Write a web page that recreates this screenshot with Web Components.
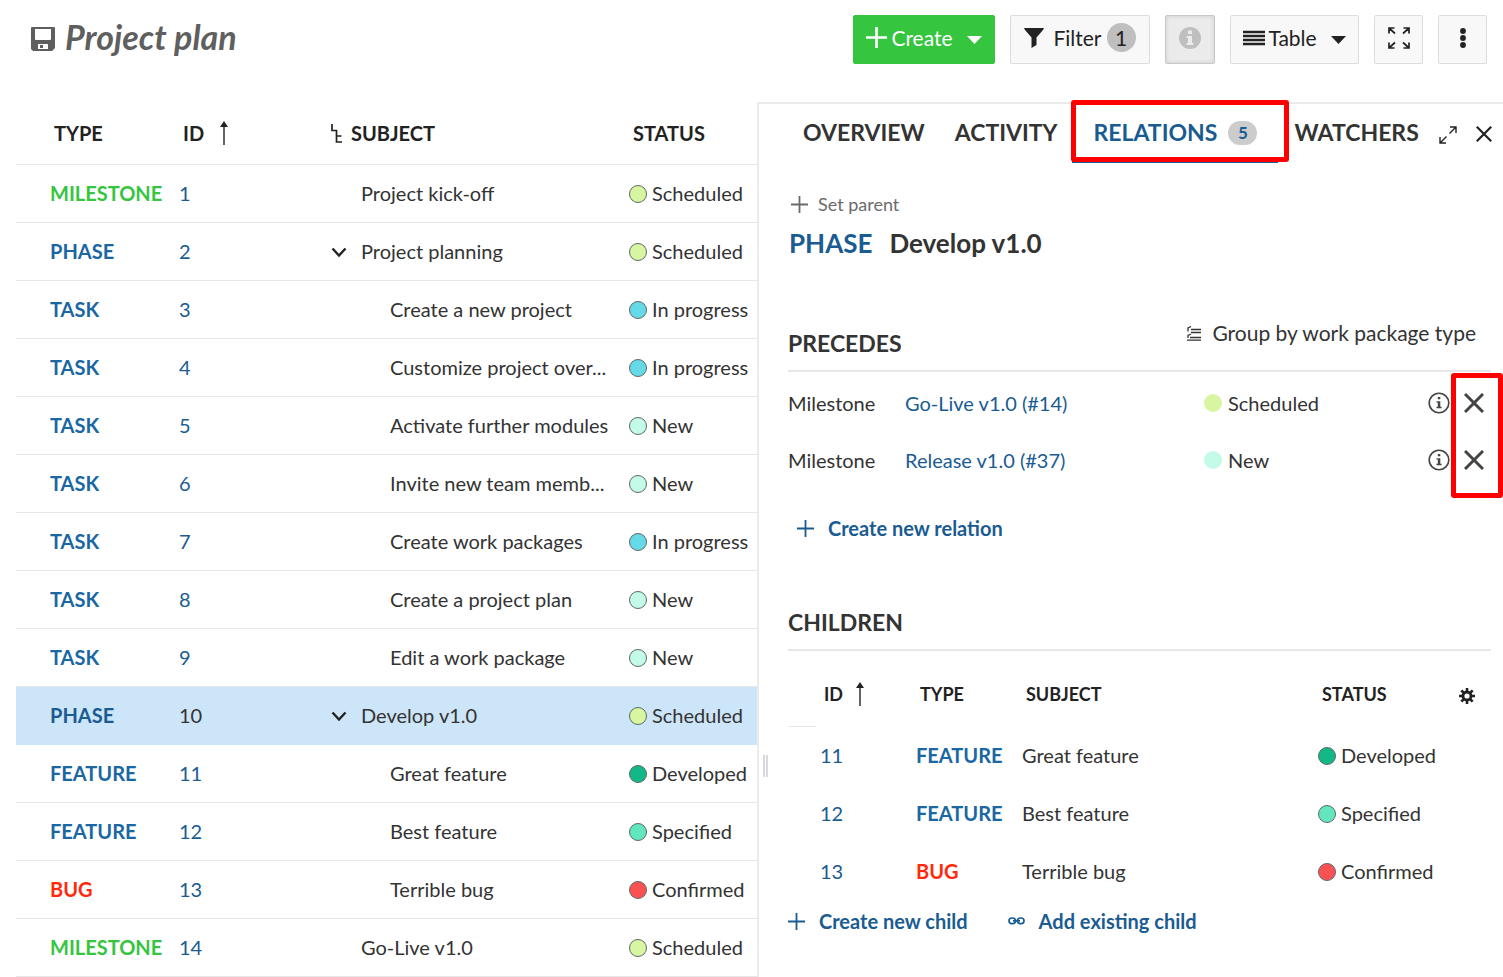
<!DOCTYPE html>
<html lang="en">
<head>
<meta charset="utf-8">
<meta name="viewport" content="width=device-width, initial-scale=1">
<title>Project plan</title>
<style>
  body { margin: 0; background: #fff; color: #333; font: 20px/28px Lato, sans-serif; }
</style>
</head>
<body>
<op-app></op-app>

<script>
const define = (name, html, setup) => {
  const template = document.createElement('template');
  template.innerHTML = html;
  customElements.define(name, class extends HTMLElement {
    constructor() {
      super();
      this.attachShadow({ mode: 'open' }).append(template.content.cloneNode(true));
    }
    connectedCallback() {
      if (setup && !this.ready) { this.ready = true; setup(this, this.shadowRoot); }
    }
  });
};

/* Icons: [viewBox, markup]; the width and height come from the viewBox. */
const ICONS = {
  save: ['0 0 24 24', '<path fill="currentColor" fill-rule="evenodd" d="M1 0H23Q24 0 24 1V21L21 24H2L0 22V1Q0 0 1 0ZM4 2V12Q4 13 5 13H19Q20 13 20 12V2ZM7 17V22H17V17ZM9 18H12V21H9Z"/>'],
  plusBig: ['0 0 21 21', '<path d="M10.500 0V21M0 10.500H21" stroke="currentColor" stroke-width="2.700"/>'],
  plus: ['0 0 17 17', '<path d="M8.500 0V17M0 8.500H17" stroke="currentColor" stroke-width="1.800"/>'],
  caret: ['0 0 15 8', '<path d="M0 0H15L7.500 8Z" fill="currentColor"/>'],
  filter: ['0 0 20 20', '<path d="M0 0H20L19 2L12.500 9.500V17L7.500 20V9.500L1 2Z" fill="currentColor"/>'],
  infoSolid: ['0 0 22 22', '<circle cx="11" cy="11" r="11" fill="currentColor"/><path d="M9 3.500H13V7H9ZM7.500 9H13V16H14.500V18H7.500V16H9V11H7.500Z" fill="#ebebeb"/>'],
  info: ['0 0 22 22', '<circle cx="11" cy="11" r="9.800" fill="none" stroke="currentColor" stroke-width="1.600"/><path d="M9.800 5H12.300V7.300H9.800ZM8.500 9.200H12.300V14.800H13.600V16.200H8.500V14.800H9.800V10.600H8.500Z" fill="currentColor"/>'],
  table: ['0 0 22 16', '<path d="M0 2H22M0 6H22M0 10H22M0 14H22" stroke="currentColor" stroke-width="2.600"/>'],
  fullscreen: ['0 0 22 22', '<path d="M1 6.500V1H6.500M1.500 1.500L7 6.500M15.500 1H21V6.500M20.500 1.500L15 6.500M1 15.500V21H6.500M1.500 20.500L7 15.500M15.500 21H21V15.500M20.500 20.500L15 15.500" fill="none" stroke="currentColor" stroke-width="1.700"/>'],
  dots: ['0 0 6 20', '<g fill="currentColor"><circle cx="3" cy="3" r="2.900"/><circle cx="3" cy="10" r="2.900"/><circle cx="3" cy="17" r="2.900"/></g>'],
  sortUp: ['0 0 8 24', '<path d="M4 0L8 6H0Z" fill="currentColor"/><path d="M4 4V24" stroke="currentColor" stroke-width="1.400"/>'],
  hierarchy: ['0 0 11 19', '<path d="M1 0V6.500H5.500V18H11M5.500 12H10.500" fill="none" stroke="currentColor" stroke-width="1.700"/>'],
  chevron: ['0 0 16 11', '<path d="M1.500 1.500L8 8.500L14.500 1.500" fill="none" stroke="currentColor" stroke-width="2.400"/>'],
  expand: ['0 0 18 18', '<path d="M11 1H17V7M16.500 1.500L10.500 7.500M1 11V17H7M1.500 16.500L7.500 10.500" fill="none" stroke="currentColor" stroke-width="1.400"/>'],
  close: ['0 0 16 16', '<path d="M.8.800L15.200 15.200M15.200.800L.8 15.200" stroke="currentColor" stroke-width="2.200"/>'],
  remove: ['0 0 20 20', '<path d="M1 1L19 19M19 1L1 19" stroke="currentColor" stroke-width="3"/>'],
  group: ['0 0 14 15', '<path d="M4 3.500H14M4 6.500H14M3 11.500H14M0 14.200H14M1 5.500V2L4 .5M1 12V9.500L4 8" fill="none" stroke="currentColor" stroke-width="1.300"/>'],
  gear: ['0 0 16 16', '<circle cx="8" cy="8" r="4" fill="none" stroke="currentColor" stroke-width="2.800"/><path d="M8 0V4M8 12V16M0 8H4M12 8H16M2.300 2.300L5 5M11 11L13.700 13.700M13.700 2.300L11 5M5 11L2.300 13.700" stroke="currentColor" stroke-width="2.600"/>'],
  link: ['0 0 17 8', '<g fill="none" stroke="currentColor" stroke-width="1.700"><rect x="1" y="1" width="6.500" height="5.600" rx="2.800"/><rect x="9.500" y="1" width="6.500" height="5.600" rx="2.800"/></g><path d="M5 3.800H12" stroke="currentColor" stroke-width="1.800"/>']
};

define('op-icon', `
  <style>:host { display: block; flex: none; } svg { display: block; }</style>`,
  (el, root) => {
    const [box, markup] = ICONS[el.getAttribute('name')];
    const [, , w, h] = box.split(' ');
    root.innerHTML += `<svg aria-hidden="true" width="${w}" height="${h}" viewBox="${box}">${markup}</svg>`;
  });

define('op-button', `
  <style>
    :host { display: block; flex: none; width: 49px; font-size: 21px; }
    :host([active]) { width: 50px; }
    :host([wide]) { width: 140px; }
    :host([kind="primary"]) { width: 142px; }
    :host([kind="view"]) { width: 129px; }
    button {
      box-sizing: border-box; width: 100%; height: 49px; padding: 0 0 4px; cursor: pointer;
      display: flex; align-items: center; justify-content: center;
      font: inherit; color: #222; background: #f8f8f8; border: 1px solid #ddd; border-radius: 2px;
    }
    :host([kind="primary"]) button { color: #fff; background: #35c53f; border-color: #35c53f; }
    :host([active]) button { color: #bfbfbf; background: #ebebeb; border-color: #c8c8c8; box-shadow: inset 0 0 4px #ccc; }
  </style>
  <button type="button"><slot></slot></button>`,
  (el, root) => el.title && root.querySelector('button').setAttribute('aria-label', el.title));

const STATUS = { Scheduled: '#d8f5a2', 'In progress': '#66d9e8', New: '#c3fae8', Developed: '#12b886', Specified: '#63e6be', Confirmed: '#fa5252' };

define('op-status', `
  <style>
    :host { display: flex; align-items: center; gap: 5px; white-space: nowrap; }
    i { box-sizing: border-box; flex: none; width: 18px; height: 18px; margin-top: 2px; border-radius: 50%; border: 1px solid #5d6b66; }
    :host([plain]) { gap: 6px; }
    :host([plain]) i { border: 0; margin: 0; }
  </style>
  <i></i><span></span>`,
  (el, root) => {
    const name = el.getAttribute('value');
    root.querySelector('i').style.background = STATUS[name];
    root.querySelector('span').textContent = name;
  });

define('op-header', `
  <style>
    :host { display: flex; align-items: flex-start; justify-content: space-between; gap: 24px; padding: 15px 16px 38px 31px; }
    h1 { display: flex; align-items: center; gap: 10px; margin: 0; font: italic 700 34px/44px Lato, sans-serif; color: #5f5f5f; white-space: nowrap; }
    h1 op-icon { margin-top: 4px; }
    nav { display: flex; gap: 15px; }
    .count { width: 29px; line-height: 29px; margin-left: 5px; border-radius: 50%; background: #bfbfbf; text-align: center; }
    .funnel { margin-right: 9px; }
    .lines { margin-right: 3px; }
    .plus { margin-right: 4px; }
    .caret { margin-left: 14px; margin-top: 5px; }
  </style>
  <h1><op-icon name="save"></op-icon>Project plan</h1>
  <nav>
    <op-button kind="primary"><op-icon class="plus" name="plusBig"></op-icon>Create<op-icon class="caret" name="caret"></op-icon></op-button>
    <op-button wide><op-icon class="funnel" name="filter"></op-icon>Filter<span class="count">1</span></op-button>
    <op-button active title="Details"><op-icon name="infoSolid"></op-icon></op-button>
    <op-button kind="view"><op-icon class="lines" name="table"></op-icon>Table<op-icon class="caret" name="caret"></op-icon></op-button>
    <op-button title="Full screen"><op-icon name="fullscreen"></op-icon></op-button>
    <op-button title="More"><op-icon name="dots"></op-icon></op-button>
  </nav>`);

const TYPE_CLASS = { MILESTONE: 'green', BUG: 'red' };
const TABLE_CSS = `
  table { width: 100%; table-layout: fixed; border-collapse: separate; border-spacing: 0; }
  th, td { box-sizing: border-box; text-align: left; white-space: nowrap; }
  td { height: 58px; padding: 0 0 2px 4px; }
  th { padding: 0 0 0 8px; font-weight: 700; color: #222; }
  a { color: #1a5c91; text-decoration: none; }
  .type { font-weight: 700; color: #1a67a3; }
  .green { color: #35c53f; }
  .red { color: #ff2a0a; }
  .line { display: flex; align-items: center; }`;

const ROWS = [
  ['MILESTONE', 1, 'Project kick-off', 'Scheduled', 0],
  ['PHASE', 2, 'Project planning', 'Scheduled', 0, true],
  ['TASK', 3, 'Create a new project', 'In progress', 1],
  ['TASK', 4, 'Customize project over...', 'In progress', 1],
  ['TASK', 5, 'Activate further modules', 'New', 1],
  ['TASK', 6, 'Invite new team memb...', 'New', 1],
  ['TASK', 7, 'Create work packages', 'In progress', 1],
  ['TASK', 8, 'Create a project plan', 'New', 1],
  ['TASK', 9, 'Edit a work package', 'New', 1],
  ['PHASE', 10, 'Develop v1.0', 'Scheduled', 0, true, true],
  ['FEATURE', 11, 'Great feature', 'Developed', 1],
  ['FEATURE', 12, 'Best feature', 'Specified', 1],
  ['BUG', 13, 'Terrible bug', 'Confirmed', 1],
  ['MILESTONE', 14, 'Go-Live v1.0', 'Scheduled', 0]
];

define('op-work-packages', `
  <style>
    :host { display: block; padding-left: 16px; }
    ${TABLE_CSS}
    .c-type { width: 159px; } .c-id { width: 150px; } .c-status { width: 132px; }
    th { height: 63px; border-bottom: 1px solid #e7e7e7; }
    td { border-bottom: 1px solid #e7e7e7; }
    td:first-child { padding-left: 34px; }
    th:first-child { padding-left: 38px; }
    th:nth-child(3) { padding-left: 6px; }
    .sort { gap: 16px; }
    .tree { gap: 9px; }
    .toggle { flex: none; width: 32px; padding: 4px 0 0 2px; margin: 0; border: 0; background: none; box-sizing: border-box; text-align: left; color: #222; }
    .child { padding-left: 29px; }
    .selected td { background: #cde5f8; border-color: #cde5f8; }
    .selected a { color: #333; }
    .selected .type { color: #1a5c91; }
  </style>
  <table>
    <colgroup><col class="c-type"><col class="c-id"><col><col class="c-status"></colgroup>
    <thead><tr>
      <th scope="col">TYPE</th>
      <th scope="col"><div class="line sort">ID<op-icon name="sortUp"></op-icon></div></th>
      <th scope="col"><div class="line tree"><op-icon name="hierarchy"></op-icon>SUBJECT</div></th>
      <th scope="col">STATUS</th>
    </tr></thead>
    <tbody></tbody>
  </table>`,
  (el, root) => {
    root.querySelector('tbody').innerHTML = ROWS.map(([type, id, subject, status, depth, parent, selected]) => `
      <tr class="${selected ? 'selected' : ''}">
        <td><span class="type ${TYPE_CLASS[type] || ''}">${type}</span></td>
        <td><a href="#${id}">${id}</a></td>
        <td><div class="line ${depth ? 'child' : ''}">${parent
          ? '<button type="button" class="toggle" aria-label="Collapse"><op-icon name="chevron"></op-icon></button>'
          : '<span class="toggle"></span>'}<span>${subject}</span></div></td>
        <td><op-status value="${status}"></op-status></td>
      </tr>`).join('');
  });

define('op-children', `
  <style>
    :host { display: block; }
    ${TABLE_CSS}
    .c-gap { width: 28px; } .c-id { width: 96px; } .c-type { width: 106px; } .c-status { width: 128px; } .c-cog { width: 49px; }
    th { height: 76px; font-size: 18px; padding-top: 10px; }
    .gap { border-bottom: 1px solid #e7e7e7; padding: 0; }
    .sort { gap: 13px; }
    button { display: block; padding: 3px 0 0 9px; border: 0; background: none; color: #222; }
  </style>
  <table>
    <colgroup><col class="c-gap"><col class="c-id"><col class="c-type"><col><col class="c-status"><col class="c-cog"></colgroup>
    <thead><tr>
      <td class="gap"></td>
      <th scope="col"><div class="line sort">ID<op-icon name="sortUp"></op-icon></div></th>
      <th scope="col">TYPE</th>
      <th scope="col">SUBJECT</th>
      <th scope="col">STATUS</th>
      <th scope="col"><button type="button" aria-label="Configure"><op-icon name="gear"></op-icon></button></th>
    </tr></thead>
    <tbody></tbody>
  </table>`,
  (el, root) => {
    root.querySelector('tbody').innerHTML = ROWS.slice(10, 13).map(([type, id, subject, status]) => `
      <tr><td></td><td><a href="#${id}">${id}</a></td>
        <td><span class="type ${TYPE_CLASS[type] || ''}">${type}</span></td>
        <td>${subject}</td><td><op-status value="${status}"></op-status></td><td></td></tr>`).join('');
  });

define('op-tabs', `
  <style>
    :host { display: flex; height: 59px; font-size: 23px; font-weight: 700; }
    a { box-sizing: border-box; padding-bottom: 3px; display: flex; align-items: center; color: #333; text-decoration: none; }
    .overview { margin-left: 44px; }
    .activity { margin-left: 30px; }
    .relations { position: relative; margin-left: 14px; width: 206px; padding-left: 22px; gap: 11px; color: #1a5c91; border-bottom: 2px solid #1a5c91; padding-bottom: 1px; }
    .relations::after { content: ""; position: absolute; inset: -4px -11px -1px -1px; border: 5px solid #f00; border-radius: 3px; }
    .count { width: 29px; border-radius: 12px; background: #ccc; font-size: 17px; line-height: 24px; text-align: center; margin-top: 2px; }
    .watchers { margin-left: 17px; }
    .tools { display: flex; align-items: center; gap: 19px; margin-left: auto; padding-right: 11px; }
    button { display: block; padding: 0; border: 0; background: none; color: #222; }
    .expand { padding-top: 3px; }
  </style>
  <a class="overview" href="#overview">OVERVIEW</a>
  <a class="activity" href="#activity">ACTIVITY</a>
  <a class="relations" href="#relations" aria-current="page">RELATIONS<span class="count">5</span></a>
  <a class="watchers" href="#watchers">WATCHERS</a>
  <div class="tools">
    <button type="button" class="expand" aria-label="Open full view"><op-icon name="expand"></op-icon></button>
    <button type="button" aria-label="Close"><op-icon name="close"></op-icon></button>
  </div>`);

define('op-section', `
  <style>
    :host { display: block; }
    header { display: flex; align-items: flex-start; justify-content: space-between; height: 51px; padding-right: 15px; border-bottom: 2px solid #e7e7e7; }
    h2 { margin: 0; padding-top: 10px; font: 700 23px/28px Lato, sans-serif; }
  </style>
  <header><h2></h2><slot name="action"></slot></header>
  <slot></slot>`,
  (el, root) => { root.querySelector('h2').textContent = el.getAttribute('heading'); });

define('op-relations', `
  <style>
    :host { display: block; position: relative; padding-top: 2px; }
    ul { margin: 0; padding: 0; list-style: none; }
    li { display: grid; grid-template-columns: 117px 1fr 224px 36px 27px; align-items: center; height: 57px; }
    a { color: #1a5c91; text-decoration: none; }
    button { padding: 0; border: 0; background: none; color: #444; text-align: left; }
    .mark { position: absolute; top: 1px; right: -12px; width: 52px; height: 125px; box-sizing: border-box; border: 5px solid #f00; border-radius: 3px; pointer-events: none; }
  </style>
  <ul></ul><div class="mark"></div>`,
  (el, root) => {
    root.querySelector('ul').innerHTML = [['Go-Live v1.0 (#14)', 'Scheduled'], ['Release v1.0 (#37)', 'New']].map(([name, status]) => `
      <li><span>Milestone</span><a href="#wp">${name}</a><op-status plain value="${status}"></op-status>
        <button type="button" aria-label="Details"><op-icon name="info"></op-icon></button>
        <button type="button" aria-label="Remove"><op-icon name="remove"></op-icon></button></li>`).join('');
  });

define('op-action', `
  <style>
    :host { display: block; }
    button { display: flex; align-items: center; gap: 14px; padding: 0; border: 0; background: none; font: inherit; font-weight: 700; color: #1a5c91; white-space: nowrap; cursor: pointer; }
    :host([quiet]) button { gap: 10px; font-weight: 400; font-size: 18px; color: #6b6b6b; }
    :host([group]) button { gap: 11px; font-weight: 400; font-size: 21px; color: #333; }
  </style>
  <button type="button"><slot></slot></button>`,
  (el, root) => {
    const icon = document.createElement('op-icon');
    icon.setAttribute('name', el.getAttribute('icon'));
    root.querySelector('button').prepend(icon);
  });

define('op-details', `
  <style>
    :host { display: block; position: relative; border-left: 2px solid #ebebeb; border-top: 2px solid #ebebeb; }
    .handle { position: absolute; left: 4px; top: 651px; width: 1px; height: 22px; border: solid #d8d8de; border-width: 0 2px; }
    .body { padding: 27px 12px 0 29px; }
    .title { display: flex; gap: 17px; margin: 9px 0 60px 1px; font: 700 26px/32px Lato, sans-serif; }
    .title span { color: #1a5c91; }
    .parent { margin-left: 3px; }
    .relation { margin: 26px 0 56px 9px; }
    .links { display: flex; gap: 40px; margin-top: 6px; }
  </style>
  <op-tabs></op-tabs>
  <div class="handle"></div>
  <div class="body">
    <op-action class="parent" quiet icon="plus">Set parent</op-action>
    <h1 class="title"><span>PHASE</span>Develop v1.0</h1>
    <op-section heading="PRECEDES">
      <op-action slot="action" group icon="group">Group by work package type</op-action>
      <op-relations></op-relations>
    </op-section>
    <op-action class="relation" icon="plus">Create new relation</op-action>
    <op-section heading="CHILDREN"><op-children></op-children></op-section>
    <div class="links">
      <op-action icon="plus">Create new child</op-action>
      <op-action icon="link">Add existing child</op-action>
    </div>
  </div>`);

define('op-app', `
  <style>
    :host { display: block; }
    main { display: grid; grid-template-columns: minmax(0, 757fr) minmax(0, 746fr); }
  </style>
  <op-header></op-header>
  <main>
    <op-work-packages></op-work-packages>
    <op-details></op-details>
  </main>`);
</script>
</body>
</html>
